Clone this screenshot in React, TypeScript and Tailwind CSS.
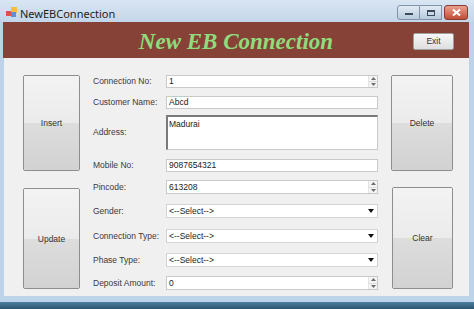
import React from "react"

const font = { fontFamily: '"Liberation Sans", Arial, sans-serif' }

function Spinner() {
    return (
        <div className="flex flex-col w-[9px] h-full border-l border-[#e4e4e4] bg-[#f4f4f4]">
            <div className="flex-1 flex items-center justify-center border-b border-[#dcdcdc]">
                <svg width="5" height="3" viewBox="0 0 5 3"><path d="M0 3 L2.5 0 L5 3 Z" fill="#6d6d6d" /></svg>
            </div>
            <div className="flex-1 flex items-center justify-center">
                <svg width="5" height="3" viewBox="0 0 5 3"><path d="M0 0 L2.5 3 L5 0 Z" fill="#6d6d6d" /></svg>
            </div>
        </div>
    )
}

function TextBox({ value, spin, h }: { value: string; spin?: boolean; h: string }) {
    return (
        <div className={`w-[212px] ${h} bg-white border border-[#c9c9c9] flex items-center`}>
            <span className="flex-1 pl-[2px] text-[8.5px] text-[#222]">{value}</span>
            {spin && <Spinner />}
        </div>
    )
}

function Combo() {
    return (
        <div className="w-[212px] h-[14px] bg-white border border-[#d4d4d4] flex items-center">
            <span className="flex-1 pl-[2px] text-[8.5px] text-[#222]">{"<--Select-->"}</span>
            <svg width="6" height="4" viewBox="0 0 6 4" className="mr-[3px]"><path d="M0 0 L6 0 L3 4 Z" fill="#111" /></svg>
        </div>
    )
}

function Row({ label, mt, children }: { label: string; mt: string; children: React.ReactNode }) {
    return (
        <div className={`flex items-center ${mt}`}>
            <div className="w-[73px] text-[8.5px] text-[#3a3a3a]">{label}</div>
            {children}
        </div>
    )
}

function BigButton({ label, h, w }: { label: string; h: string; w: string }) {
    return (
        <div className={`${w} ${h} border border-[#8e8e8e] rounded-[2px] flex flex-col overflow-hidden`}>
            <div className="flex-1 bg-gradient-to-b from-[#f3f3f3] to-[#ebebeb]"></div>
            <div className="flex-1 bg-gradient-to-b from-[#dddddd] to-[#d2d2d2] relative">
                <span className="absolute -top-[6px] left-0 right-0 text-center text-[8.5px] text-[#333]">{label}</span>
            </div>
        </div>
    )
}

export default function App() {
    return (
        <div style={font} className="w-[474px] h-[309px] overflow-hidden flex flex-col bg-[#bcd3ea]">
            {/* title bar */}
            <div className="h-[22px] flex items-start bg-gradient-to-b from-[#d9e6f3] to-[#c3d6ea]">
                <svg width="12" height="11" viewBox="0 0 12 11" className="ml-[6px] mt-[7px]">
                    <rect x="0" y="4" width="6" height="5" fill="#d9534f" />
                    <rect x="5" y="0" width="6" height="6" fill="#f0c040" />
                    <rect x="5" y="5" width="5" height="5" fill="#5b8fd6" />
                </svg>
                <span className="ml-[2px] mt-[6px] text-[11px] text-[#1e1e1e]" style={{ fontFamily: '"Noto Sans", "Open Sans", sans-serif' }}>NewEBConnection</span>
                <div className="ml-auto mr-[6px] mt-[5px] flex">
                    <div className="w-[23px] h-[15px] border border-[#7f93ab] rounded-l-[3px] bg-gradient-to-b from-[#e2ebf5] to-[#b9cadd] flex items-end justify-center pb-[4px]">
                        <div className="w-[8px] h-[2px] bg-[#3c4a5c]"></div>
                    </div>
                    <div className="w-[22px] h-[15px] border-y border-r border-[#7f93ab] bg-gradient-to-b from-[#e2ebf5] to-[#b9cadd] flex items-center justify-center">
                        <div className="w-[8px] h-[6px] border border-[#3c4a5c] border-t-2"></div>
                    </div>
                    <div className="ml-[2px] w-[24px] h-[15px] border border-[#8c3b30] rounded-[3px] bg-gradient-to-b from-[#e8a190] to-[#c24a35] flex items-center justify-center">
                        <svg width="9" height="7" viewBox="0 0 9 7"><path d="M1 0.5 L8 6.5 M8 0.5 L1 6.5" stroke="#fff" strokeWidth="2" /></svg>
                    </div>
                </div>
            </div>

            <div className="flex-1 flex flex-col pl-[4px] pr-[5px]">
                {/* header */}
                <div className="h-[36px] -ml-[1px] bg-[#874238] grid grid-cols-[1fr_auto_1fr] items-center">
                    <div></div>
                    <div className="text-[23px] italic font-bold text-[#8fdc7c] leading-none pt-[2px]" style={{ fontFamily: '"Liberation Serif", "Times New Roman", serif' }}>
                        New EB Connection
                    </div>
                    <div className="flex justify-end pr-[15px] pt-[3px]">
                        <div className="w-[41px] h-[17px] border border-[#a0a0a0] rounded-[2px] bg-gradient-to-b from-[#f7f7f7] to-[#dedede] flex items-center justify-center text-[8.5px] text-[#333]">Exit</div>
                    </div>
                </div>

                {/* client */}
                <div className="h-[238px] bg-[#f0f0f0] flex pl-[19px] pt-[17px]">
                    <div className="w-[57px] flex flex-col">
                        <BigButton label="Insert" w="w-[57px]" h="h-[96px]" />
                        <div className="h-[17px]"></div>
                        <BigButton label="Update" w="w-[57px]" h="h-[101px]" />
                    </div>
                    <div className="ml-[13px] flex flex-col">
                        <Row label="Connection No:" mt="mt-0"><TextBox value="1" spin h="h-[13px]" /></Row>
                        <Row label="Customer Name:" mt="mt-[8px]"><TextBox value="Abcd" h="h-[13px]" /></Row>
                        <Row label="Address:" mt="mt-[6px]">
                            <div className="w-[212px] h-[35px] bg-white border border-[#c9c9c9] border-t-[#7a7a7a] border-l-[#7a7a7a] border-l-2 border-t-2 text-[8.5px] text-[#222] pl-[1px] pt-[1px]">Madurai</div>
                        </Row>
                        <Row label="Mobile No:" mt="mt-[9px]"><TextBox value="9087654321" h="h-[13px]" /></Row>
                        <Row label="Pincode:" mt="mt-[8px]"><TextBox value="613208" spin h="h-[14px]" /></Row>
                        <Row label="Gender:" mt="mt-[10px]"><Combo /></Row>
                        <Row label="Connection Type:" mt="mt-[11px]"><Combo /></Row>
                        <Row label="Phase Type:" mt="mt-[10px]"><Combo /></Row>
                        <Row label="Deposit Amount:" mt="mt-[9px]"><TextBox value="0" spin h="h-[14px]" /></Row>
                    </div>
                    <div className="ml-[13px] w-[62px] flex flex-col">
                        <BigButton label="Delete" w="w-[62px]" h="h-[96px]" />
                        <div className="h-[16px]"></div>
                        <BigButton label="Clear" w="w-[61px] ml-[1px]" h="h-[102px]" />
                    </div>
                </div>
                <div className="h-[6px]"></div>
            </div>
            <div className="h-[7px] bg-gradient-to-b from-[#4d7fa0] to-[#2c5670]"></div>
        </div>
    )
}
